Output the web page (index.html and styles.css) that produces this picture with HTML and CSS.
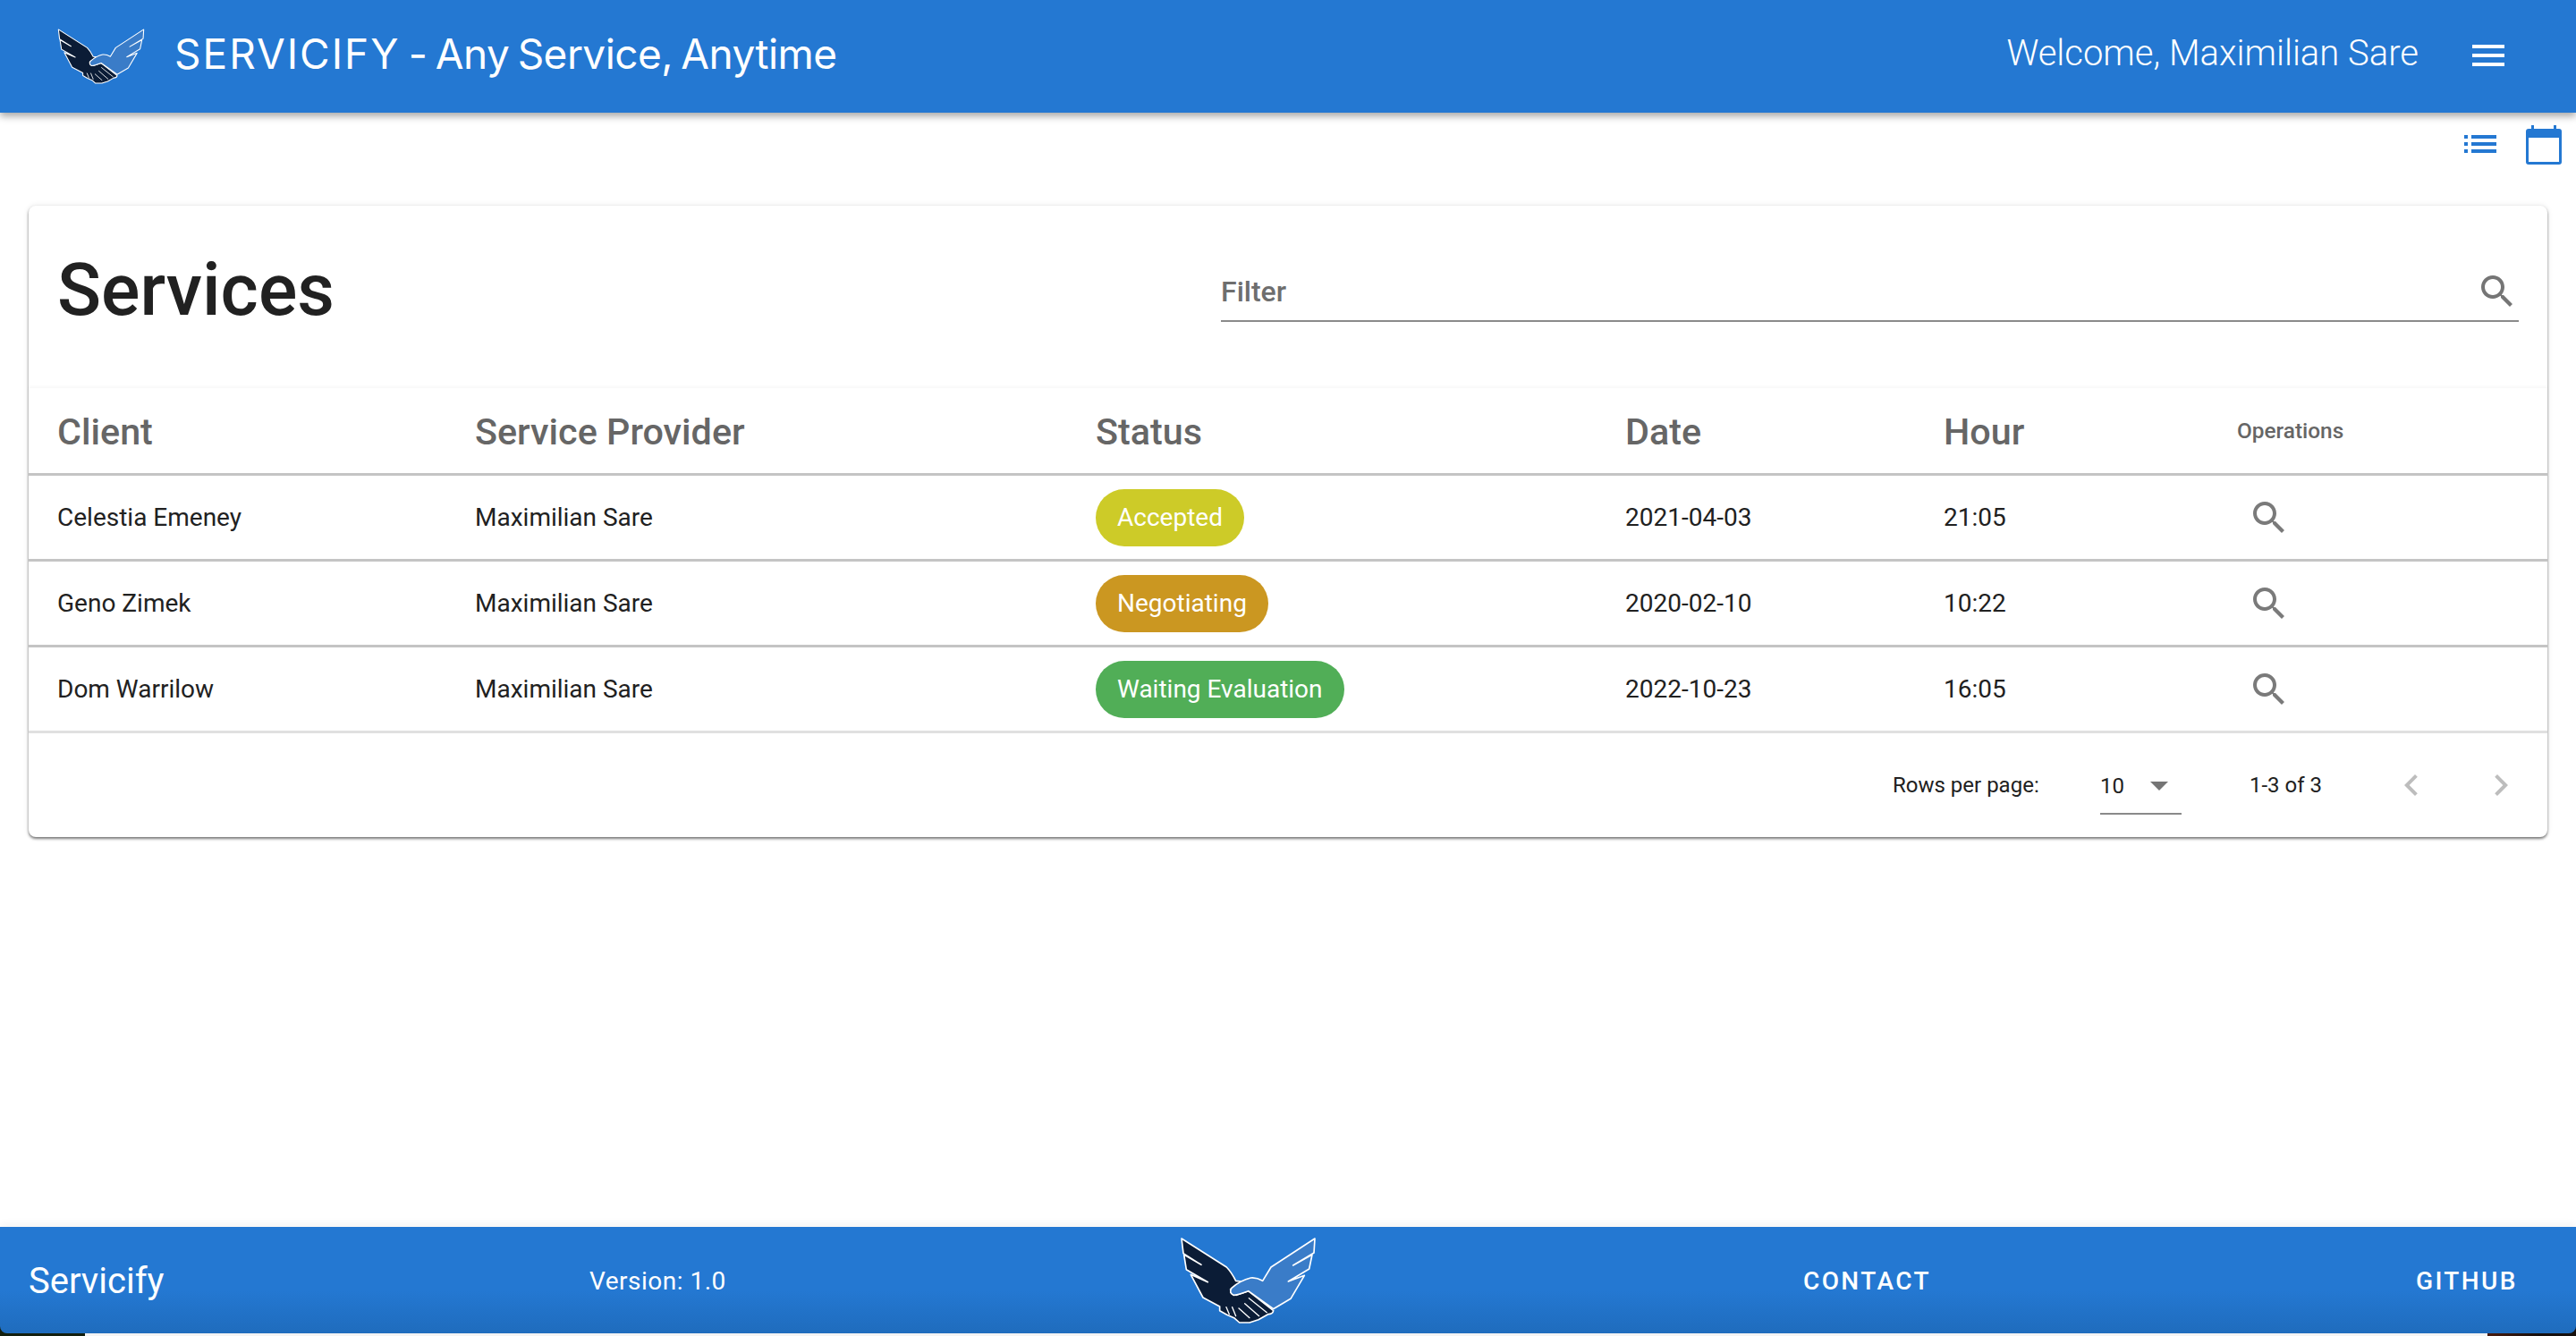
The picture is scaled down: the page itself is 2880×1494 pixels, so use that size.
FILE: index.html
```html
<!DOCTYPE html>
<html lang="en">
<head>
    <meta charset="UTF-8">
    <meta name="viewport" content="width=device-width, initial-scale=1.0">
    <title>Servicify</title>
    <link rel="stylesheet" href="styles.css">
</head>
<body>
    <svg class="sprites" width="0" height="0">
        <symbol id="logo" viewBox="175 65 465 300">
            <path fill="#0b1c36" stroke="#fff" stroke-width="5" stroke-linejoin="round" d="M184 74 L335 170 Q352 188 366 216 L384 218 L348 244 Q346 262 368 264 L408 250 L492 316 Q490 328 474 328 L442 346 L412 356 L378 356 L360 340 L336 330 L312 316 L312 302 L256 272 L215 195 L272 220 L200 178 L192 128 L250 162 L190 124 Z"/>
            <path fill="#3a7cc8" stroke="#fff" stroke-width="5" stroke-linejoin="round" d="M631 74 L484 170 L456 216 Q436 204 416 206 Q382 214 352 240 Q342 256 358 264 Q370 264 408 250 L492 310 L550 276 L596 198 L542 218 L612 176 L622 128 L558 164 L628 122 Z"/>
            <path fill="none" stroke="#fff" stroke-width="4" stroke-linecap="round" d="M410 274 L470 322 M396 292 L444 334 M376 308 L412 340 M354 304 L366 334 M334 304 L344 328"/>
        </symbol>
        <symbol id="search" viewBox="0 0 24 24">
            <path d="M15.5 14h-.79l-.28-.27C15.41 12.59 16 11.11 16 9.5 16 5.91 13.09 3 9.5 3S3 5.91 3 9.5 5.91 16 9.5 16c1.61 0 3.09-.59 4.23-1.57l.27.28v.79l5 4.99L20.49 19l-4.99-5zm-6 0C7.01 14 5 11.99 5 9.5S7.01 5 9.5 5 14 7.01 14 9.5 11.99 14 9.5 14z"/>
        </symbol>
    </svg>

    <header class="appbar">
        <div class="brand">
            <svg class="logo-small"><use href="#logo"/></svg>
            <span class="brand-name"><span class="brand-caps">SERVICIFY</span> - Any Service, Anytime</span>
        </div>
        <div class="user">
            <span class="welcome">Welcome, Maximilian Sare</span>
            <svg class="menu-icon" viewBox="0 0 36 24"><path d="M0 0h36v4H0zM0 10h36v4H0zM0 20h36v4H0z"/></svg>
        </div>
    </header>

    <main class="content">
        <div class="view-switch">
            <svg class="list-icon" viewBox="0 0 36 22"><path d="M0 0h4v4H0zM8 0h28v4H8zM0 8h4v4H0zM8 8h28v4H8zM0 16h4v4H0zM8 16h28v4H8z"/></svg>
            <svg class="calendar-icon" viewBox="0 0 40 44"><path fill-rule="evenodd" d="M6 0h3v4h22V0h3v4h3q3 0 3 3v34q0 3-3 3H3q-3 0-3-3V7q0-3 3-3h3zM3 14v27h34V14z"/></svg>
        </div>

        <section class="card">
            <div class="toolbar">
                <h1>Services</h1>
                <div class="filter">
                    <span class="filter-label">Filter</span>
                    <svg class="filter-icon"><use href="#search"/></svg>
                </div>
            </div>

            <table class="services">
                <thead>
                    <tr>
                        <th class="col-client">Client</th>
                        <th class="col-provider">Service Provider</th>
                        <th class="col-status">Status</th>
                        <th class="col-date">Date</th>
                        <th class="col-hour">Hour</th>
                        <th class="col-ops">Operations</th>
                    </tr>
                </thead>
                <tbody>
                    <tr>
                        <td>Celestia Emeney</td>
                        <td>Maximilian Sare</td>
                        <td><span class="chip accepted">Accepted</span></td>
                        <td>2021-04-03</td>
                        <td>21:05</td>
                        <td><svg class="row-icon"><use href="#search"/></svg></td>
                    </tr>
                    <tr>
                        <td>Geno Zimek</td>
                        <td>Maximilian Sare</td>
                        <td><span class="chip negotiating">Negotiating</span></td>
                        <td>2020-02-10</td>
                        <td>10:22</td>
                        <td><svg class="row-icon"><use href="#search"/></svg></td>
                    </tr>
                    <tr class="last">
                        <td>Dom Warrilow</td>
                        <td>Maximilian Sare</td>
                        <td><span class="chip waiting">Waiting Evaluation</span></td>
                        <td>2022-10-23</td>
                        <td>16:05</td>
                        <td><svg class="row-icon"><use href="#search"/></svg></td>
                    </tr>
                </tbody>
            </table>

            <div class="pager">
                <span class="rows-label">Rows per page:</span>
                <span class="rows-select">10<i class="caret"></i></span>
                <span class="range">1-3 of 3</span>
                <svg class="page-arrow" viewBox="0 0 24 24"><path d="M15.41 7.41L14 6l-6 6 6 6 1.41-1.41L10.83 12z"/></svg>
                <svg class="page-arrow" viewBox="0 0 24 24"><path d="M10 6L8.59 7.41 13.17 12l-4.58 4.59L10 18l6-6z"/></svg>
            </div>
        </section>
    </main>

    <footer class="footer">
        <span class="footer-name">Servicify</span>
        <span class="version">Version: 1.0</span>
        <svg class="logo-big"><use href="#logo"/></svg>
        <a class="footer-link contact">CONTACT</a>
        <a class="footer-link github">GITHUB</a>
    </footer>
    <div class="screen-edge"></div>
</body>
</html>
```

FILE: styles.css
```css
html, body {
    height: 100%;
}

body {
    margin: 0;
    font-family: Roboto, sans-serif;
    background-color: #fff;
    color: #212121;
    display: flex;
    flex-direction: column;
    overflow: hidden;
}

.sprites {
    display: block;
    height: 0;
}

.appbar {
    height: 126px;
    flex-shrink: 0;
    background-color: #2478d2;
    box-shadow: 0 4px 8px rgba(0, 0, 0, 0.35);
    display: flex;
    justify-content: space-between;
    align-items: center;
    color: white;
    position: relative;
}

.brand {
    display: flex;
    align-items: center;
    padding-left: 63px;
}

.logo-small {
    width: 100px;
    height: 64px;
}

.brand-name {
    font-family: Inter, sans-serif;
    font-size: 46px;
    font-weight: 400;
    margin-left: 32px;
    margin-bottom: 6px;
    letter-spacing: -0.55px;
    word-spacing: -3px;
}

.brand-caps {
    letter-spacing: 2px;
}

.user {
    display: flex;
    align-items: center;
    padding-right: 80px;
}

.welcome {
    font-size: 40px;
    font-weight: 300;
    margin-right: 60px;
    margin-bottom: 8px;
}

.menu-icon {
    width: 36px;
    height: 24px;
    fill: white;
    margin-bottom: 2px;
}

.content {
    flex: 1;
    padding: 0 32px;
}

.view-switch {
    height: 104px;
    box-sizing: border-box;
    padding-bottom: 32px;
    display: flex;
    justify-content: flex-end;
    align-items: center;
    margin-right: -16px;
    gap: 33px;
}

.list-icon {
    width: 36px;
    height: 22px;
    fill: #2478d2;
}

.calendar-icon {
    width: 40px;
    height: 44px;
    fill: #2478d2;
}

.card {
    background-color: white;
    border-radius: 8px;
    box-shadow: 0 2px 3px rgba(0, 0, 0, 0.5), 0 0 6px rgba(0, 0, 0, 0.1);
}

.toolbar {
    height: 204px;
    box-sizing: border-box;
    padding: 0 32px 16px;
    display: flex;
    justify-content: space-between;
    align-items: center;
}

.toolbar h1 {
    margin: 0;
    font-size: 81px;
    font-weight: 500;
    color: #212121;
}

.filter {
    width: 1451px;
    height: 72px;
    box-sizing: border-box;
    padding-top: 6px;
    border-bottom: 2px solid #8a8a8a;
    display: flex;
    justify-content: space-between;
    align-items: center;
}

.filter-label {
    font-size: 32px;
    font-weight: 500;
    color: #6e6e6e;
}

.filter-icon {
    width: 48px;
    height: 48px;
    fill: #757575;
}

.services {
    width: 100%;
    border-collapse: collapse;
    table-layout: fixed;
    text-align: left;
    box-shadow: 0 -2px 3px rgba(0, 0, 0, 0.03);
}

.services th {
    height: 92px;
    padding: 3px 0 0;
    font-size: 41.3px;
    font-weight: 500;
    color: #666;
    border-bottom: 3px solid #c4c4c4;
}

.col-client { width: 467px; padding-left: 32px !important; }
.col-provider { width: 694px; }
.col-status { width: 592px; }
.col-date { width: 356px; }
.col-hour { width: 328px; }

.services th.col-ops {
    height: 95px;
    padding: 0;
    font-size: 24.4px;
}

.services td {
    height: 93px;
    padding: 0;
    font-size: 28px;
    border-bottom: 3px solid #c4c4c4;
}

.services td:first-child {
    padding-left: 32px;
}

.services .last td {
    border-bottom-color: #e0e0e0;
}

.chip {
    display: inline-block;
    height: 64px;
    line-height: 64px;
    padding: 0 24px;
    border-radius: 32px;
    color: white;
    vertical-align: middle;
}

.accepted { background-color: #cdcb28; }
.negotiating { background-color: #cb9721; }
.waiting { background-color: #51ae57; }

.row-icon {
    width: 48px;
    height: 48px;
    fill: #7a7a7a;
    margin-left: 12px;
    vertical-align: middle;
}

.pager {
    height: 116px;
    display: flex;
    align-items: center;
    font-size: 24px;
    padding-left: 2084px;
}

.rows-label {
    width: 232px;
    white-space: nowrap;
}

.rows-select {
    width: 91px;
    height: 62px;
    line-height: 62px;
    box-sizing: border-box;
    border-bottom: 2px solid #8a8a8a;
    display: flex;
    align-items: center;
    white-space: nowrap;
    margin-top: 4px;
}

.caret {
    width: 0;
    height: 0;
    border-left: 10px solid transparent;
    border-right: 10px solid transparent;
    border-top: 10px solid #757575;
    margin-left: 29px;
}

.range {
    margin-left: 76px;
    width: 88px;
    white-space: nowrap;
}

.page-arrow {
    width: 48px;
    height: 48px;
    fill: #bdbdbd;
    margin-left: 69px;
}

.page-arrow + .page-arrow {
    margin-left: 52px;
}

.footer {
    height: 119px;
    box-sizing: border-box;
    padding-top: 2px;
    flex-shrink: 0;
    margin-bottom: -8px;
    background: linear-gradient(#2478d2 60%, #1f6cbd);
    border-radius: 0 0 8px 8px;
    box-shadow: 0 -4px 8px rgba(0, 0, 0, 0.04);
    color: white;
    display: flex;
    align-items: center;
    position: relative;
    z-index: 1;
}

.screen-edge {
    height: 11px;
    flex-shrink: 0;
    background: linear-gradient(to right, #14200f 95px, #f4f4f4 95px, #f4f4f4 2781px, #4a1c10 2781px, #16100e 2840px);
}

.footer-name {
    font-size: 40px;
    margin-left: 32px;
    width: 627px;
}

.version {
    font-size: 28px;
    width: 659px;
    letter-spacing: 0.5px;
}

.logo-big {
    width: 155px;
    height: 100px;
    margin-top: -2px;
}

.footer-link {
    font-size: 28px;
    font-weight: 500;
    letter-spacing: 2.4px;
}

.contact {
    margin-left: 543px;
}

.github {
    margin-left: 542px;
}
```
